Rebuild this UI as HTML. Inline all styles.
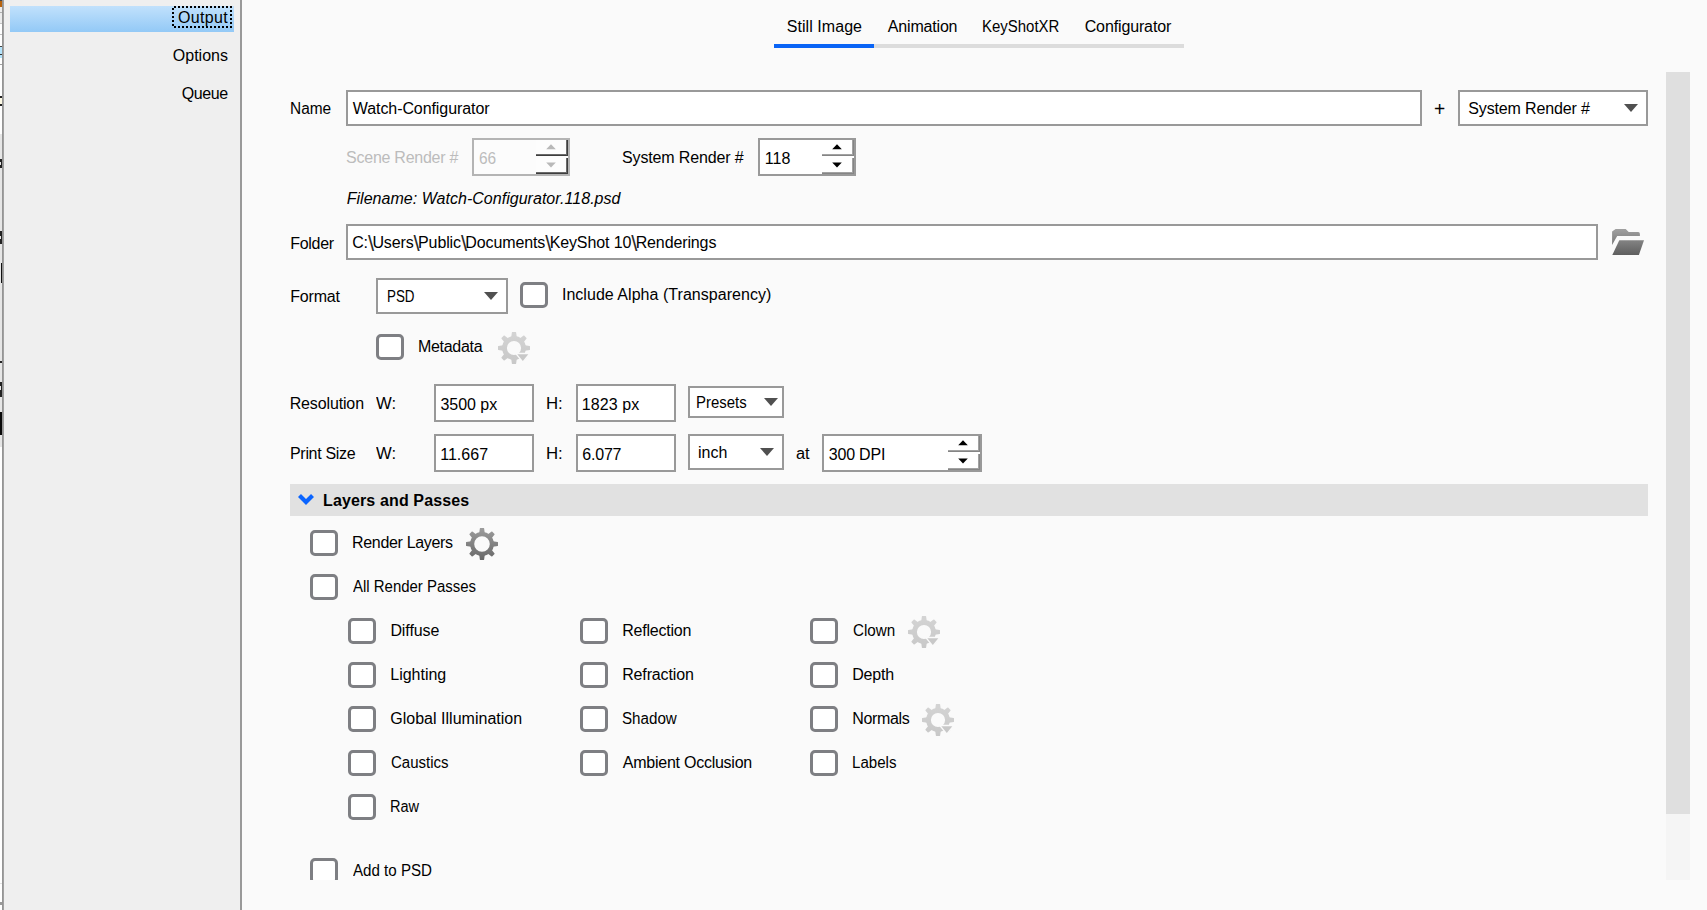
<!DOCTYPE html>
<html lang="en">
<head>
<meta charset="utf-8">
<title>Render Output</title>
<style>
*{box-sizing:border-box;margin:0;padding:0}
html,body{width:1707px;height:910px;overflow:hidden;background:#fafafa}
body{position:relative;font-family:"Liberation Sans",sans-serif;font-size:16px;color:#000;line-height:20px}
.abs,.t,.inp,.cb,.spin{position:absolute}
.t{white-space:pre;height:20px;line-height:20px;transform-origin:0 0}
.t.dis{color:#bcbcbc}
.i{font-style:italic}
.bs{font-size:22px;letter-spacing:-1.67px;position:relative;top:3px;line-height:0;color:#2c2c2c}
.b{font-weight:bold}
#leftstrip{position:absolute;left:0;top:0;width:2px;height:910px;background:#fff}
#leftborder{position:absolute;left:2px;top:0;width:2px;height:910px;background:linear-gradient(90deg,#8e8e8e,#a8a8a8)}
#side{position:absolute;left:4px;top:0;width:236px;height:910px;background:#efefef}
#sideborder{position:absolute;left:240px;top:0;width:2px;height:910px;background:#999}
#hl{position:absolute;left:10px;top:6px;width:224px;height:26px;background:linear-gradient(#c1e1fc,#93c9f6)}
.inp{background:#fff;border:2px solid #999}
.cb{width:28px;height:26px;border:3px solid #7e7f83;border-radius:5px;background:#fff}
.spin{background:#fff;border:2px solid #999}
.spin.dis{border-color:#b4b4b4;background:#fcfcfc}
.sb{position:absolute;right:0;width:32px;background:#fff;box-shadow:inset -1px -1px 0 #858585,inset -2px -2px 0 #a2a2a2}
.spin.dis .sb{background:#fdfdfd;box-shadow:inset -1px -1px 0 #3e3e3e,inset -2px -2px 0 #6a6a6a}
.sb.up{top:0;height:16px}
.sb.dn{top:18px;height:16px}
</style>
</head>
<body>
<div id="leftstrip"></div>
<div class="abs" style="left:0px;top:0px;width:2px;height:7px;background:#b8630d"></div>
<div class="abs" style="left:0px;top:0px;width:2px;height:1px;background:#444"></div>
<div class="abs" style="left:0px;top:7px;width:2px;height:16px;background:#ececec"></div>
<div class="abs" style="left:0px;top:12px;width:2px;height:1px;background:#b0b0b0"></div>
<div class="abs" style="left:0px;top:23px;width:2px;height:1px;background:#c4c4c4"></div>
<div class="abs" style="left:0px;top:34px;width:2px;height:1px;background:#bdbdbd"></div>
<div class="abs" style="left:0px;top:46px;width:2px;height:12px;background:#b4e4fc"></div>
<div class="abs" style="left:0px;top:46px;width:2px;height:1px;background:#444"></div>
<div class="abs" style="left:0px;top:54px;width:2px;height:1px;background:#333"></div>
<div class="abs" style="left:0px;top:64px;width:2px;height:1px;background:#a0a0a0"></div>
<div class="abs" style="left:0px;top:97px;width:2px;height:8px;background:#fffbe6"></div>
<div class="abs" style="left:0px;top:96px;width:2px;height:2px;background:#222"></div>
<div class="abs" style="left:0px;top:104px;width:2px;height:2px;background:#222"></div>
<div class="abs" style="left:0px;top:134px;width:2px;height:313px;background:#e6e6e6"></div>
<div class="abs" style="left:0px;top:159px;width:2px;height:9px;background:#222"></div>
<div class="abs" style="left:0px;top:162px;width:1px;height:3px;background:#e6e6e6"></div>
<div class="abs" style="left:0px;top:231px;width:2px;height:13px;background:#222"></div>
<div class="abs" style="left:0px;top:236px;width:1px;height:3px;background:#e6e6e6"></div>
<div class="abs" style="left:1px;top:263px;width:1px;height:20px;background:#111"></div>
<div class="abs" style="left:0px;top:361px;width:2px;height:2px;background:#222"></div>
<div class="abs" style="left:0px;top:382px;width:2px;height:15px;background:#222"></div>
<div class="abs" style="left:0px;top:386px;width:1px;height:4px;background:#e6e6e6"></div>
<div class="abs" style="left:0px;top:412px;width:2px;height:23px;background:#0a0a0a"></div>
<div class="abs" style="left:0px;top:883px;width:2px;height:1px;background:#e2e2e2"></div>
<div class="abs" style="left:0px;top:902px;width:2px;height:3px;background:#9a9a9a"></div>
<div id="leftborder"></div>
<div id="side"></div>
<div id="sideborder"></div>
<div id="hl"></div>
<svg id="focus" class="abs" style="left:170px;top:4px" width="64" height="26" viewBox="0 0 64 26" shape-rendering="crispEdges"><path d="M4,2h2v2h-2zM8,2h2v2h-2zM12,2h2v2h-2zM16,2h2v2h-2zM20,2h2v2h-2zM24,2h2v2h-2zM28,2h2v2h-2zM32,2h2v2h-2zM36,2h2v2h-2zM40,2h2v2h-2zM44,2h2v2h-2zM48,2h2v2h-2zM52,2h2v2h-2zM56,2h2v2h-2zM60,2h2v2h-2zM4,22h2v2h-2zM8,22h2v2h-2zM12,22h2v2h-2zM16,22h2v2h-2zM20,22h2v2h-2zM24,22h2v2h-2zM28,22h2v2h-2zM32,22h2v2h-2zM36,22h2v2h-2zM40,22h2v2h-2zM44,22h2v2h-2zM48,22h2v2h-2zM52,22h2v2h-2zM56,22h2v2h-2zM60,22h2v2h-2zM2,4h2v2h-2zM2,8h2v2h-2zM2,12h2v2h-2zM2,16h2v2h-2zM2,20h2v2h-2zM60,6h2v2h-2zM60,10h2v2h-2zM60,14h2v2h-2zM60,18h2v2h-2z" fill="#000"/></svg>
<div id="t0" class="t" style="left:177.9px;top:8px;letter-spacing:0.35px;">Output</div>
<div id="t1" class="t" style="left:172.8px;top:46px;">Options</div>
<div id="t2" class="t" style="left:181.8px;top:84px;letter-spacing:-0.41px;">Queue</div>
<div id="t3" class="t" style="left:786.7px;top:17px;letter-spacing:0.06px;">Still Image</div>
<div id="t4" class="t" style="left:887.8px;top:17px;letter-spacing:-0.18px;">Animation</div>
<div id="t5" class="t" style="left:982.4px;top:17px;transform:scaleX(0.936);">KeyShotXR</div>
<div id="t6" class="t" style="left:1084.7px;top:17px;letter-spacing:-0.13px;">Configurator</div>
<div class="abs" style="left:774px;top:44px;width:410px;height:4px;background:#dcdcdc"></div>
<div class="abs" style="left:774px;top:44px;width:100px;height:4px;background:#0a64f6"></div>
<div class="abs" style="left:1666px;top:72px;width:24px;height:808px;background:#f5f5f5"></div>
<div class="abs" style="left:1666px;top:72px;width:24px;height:742px;background:#dfdfdf"></div>
<div id="t7" class="t" style="left:290.4px;top:99px;transform:scaleX(0.965);">Name</div>
<div class="inp" style="left:346px;top:90px;width:1076px;height:36px"></div>
<div id="t8" class="t" style="left:352.8px;top:99px;letter-spacing:-0.08px;">Watch-Configurator</div>
<div id="t9" class="t" style="left:1434.3px;top:99px;transform:scaleX(0.962);font-size:20px">+</div>
<div class="inp" style="left:1458px;top:90px;width:190px;height:36px"></div>
<div id="t10" class="t" style="left:1468.3px;top:99px;letter-spacing:-0.14px;">System Render #</div>
<svg class="abs" style="left:1624px;top:104px" width="14" height="8" viewBox="0 0 14 8"><polygon points="0,0 14,0 7.0,8" fill="#505050"/></svg>
<div id="t11" class="t dis" style="left:346.1px;top:148px;letter-spacing:-0.26px;">Scene Render #</div>
<div class="spin dis" style="left:472px;top:138px;width:98px;height:38px"><div class="sb up"><svg width="10" height="6" viewBox="0 0 10 6" style="position:absolute;left:10px;top:4px"><polygon points="5,0.2 9.8,5.3 0.2,5.3" fill="#b9b9b9"/></svg></div><div class="sb dn"><svg width="10" height="6" viewBox="0 0 10 6" style="position:absolute;left:10px;top:4px"><polygon points="0.2,0.4 9.8,0.4 5,5.5" fill="#b9b9b9"/></svg></div></div>
<div id="t12" class="t dis" style="left:478.5px;top:149px;transform:scaleX(0.966);">66</div>
<div id="t13" class="t" style="left:622px;top:148px;letter-spacing:-0.14px;">System Render #</div>
<div class="spin" style="left:758px;top:138px;width:98px;height:38px"><div class="sb up"><svg width="10" height="6" viewBox="0 0 10 6" style="position:absolute;left:10px;top:4px"><polygon points="5,0.2 9.8,5.3 0.2,5.3" fill="#000"/></svg></div><div class="sb dn"><svg width="10" height="6" viewBox="0 0 10 6" style="position:absolute;left:10px;top:4px"><polygon points="0.2,0.4 9.8,0.4 5,5.5" fill="#000"/></svg></div></div>
<div id="t14" class="t" style="left:764.8px;top:149px;letter-spacing:0.06px;">118</div>
<div id="t15" class="t i" style="left:346.7px;top:189px;letter-spacing:0.03px;">Filename: Watch-Configurator.118.psd</div>
<div id="t16" class="t" style="left:290.3px;top:234px;letter-spacing:-0.32px;">Folder</div>
<div class="inp" style="left:346px;top:224px;width:1252px;height:36px"></div>
<div id="t17" class="t" style="left:352.2px;top:233px;letter-spacing:-0.12px;">C:<span class="bs">\</span>Users<span class="bs">\</span>Public<span class="bs">\</span>Documents<span class="bs">\</span>KeyShot 10<span class="bs">\</span>Renderings</div>
<svg class="abs" style="left:1610px;top:226px" width="36" height="32" viewBox="1610 226 36 32"><defs><linearGradient id="fg" gradientUnits="userSpaceOnUse" x1="0" y1="229" x2="0" y2="255"><stop offset="0" stop-color="#a0a0a0"/><stop offset="1" stop-color="#5e5e5e"/></linearGradient></defs><path fill="url(#fg)" d="M1612.1,231.4L1615.6,229H1625.7L1628.7,232H1638.2Q1639.9,232.2 1639.9,234V235.9H1617.2L1612.1,245Z"/><path fill="url(#fg)" d="M1619.3,240.2H1644L1638.9,255H1612.3Z"/></svg>
<div id="t18" class="t" style="left:290.3px;top:287px;letter-spacing:-0.2px;">Format</div>
<div class="inp" style="left:376px;top:278px;width:132px;height:36px"></div>
<div id="t19" class="t" style="left:386.6px;top:287px;transform:scaleX(0.837);">PSD</div>
<svg class="abs" style="left:484px;top:292px" width="14" height="8" viewBox="0 0 14 8"><polygon points="0,0 14,0 7.0,8" fill="#505050"/></svg>
<div class="cb" style="left:520px;top:282px"></div>
<div id="t20" class="t" style="left:561.9px;top:285px;letter-spacing:0.04px;">Include Alpha (Transparency)</div>
<div class="cb" style="left:376px;top:334px"></div>
<div id="t21" class="t" style="left:418px;top:337px;letter-spacing:-0.31px;">Metadata</div>
<svg class="abs" style="left:498px;top:332px" width="32" height="32" viewBox="-16 -16 32 32"><defs><linearGradient id="g498_332" gradientUnits="userSpaceOnUse" x1="0" y1="-16" x2="0" y2="16"><stop offset="0" stop-color="#d4d4d4"/><stop offset="1" stop-color="#c8c8c8"/></linearGradient></defs><g fill="url(#g498_332)" stroke="none"><path d="M-2.80,-10.80L-2.10,-15.70L-1.70,-16.00L1.70,-16.00L2.10,-15.70L2.80,-10.80ZM5.66,-9.62L9.62,-12.59L10.11,-12.52L12.52,-10.11L12.59,-9.62L9.62,-5.66ZM10.80,-2.80L15.70,-2.10L16.00,-1.70L16.00,1.70L15.70,2.10L10.80,2.80ZM9.62,5.66L12.59,9.62L12.52,10.11L10.11,12.52L9.62,12.59L5.66,9.62ZM2.80,10.80L2.10,15.70L1.70,16.00L-1.70,16.00L-2.10,15.70L-2.80,10.80ZM-5.66,9.62L-9.62,12.59L-10.11,12.52L-12.52,10.11L-12.59,9.62L-9.62,5.66ZM-10.80,2.80L-15.70,2.10L-16.00,1.70L-16.00,-1.70L-15.70,-2.10L-10.80,-2.80ZM-9.62,-5.66L-12.59,-9.62L-12.52,-10.11L-10.11,-12.52L-9.62,-12.59L-5.66,-9.62Z"/><path fill-rule="evenodd" d="M0,-11.9A11.9,11.9 0 1 0 0,11.9A11.9,11.9 0 1 0 0,-11.9ZM0,-7.1A7.1,7.1 0 1 1 0,7.1A7.1,7.1 0 1 1 0,-7.1Z"/></g><polygon points="3.3,6.2 14.3,6.2 8.8,12.9" fill="#fafafa" stroke="#fafafa" stroke-width="2.8" stroke-linejoin="miter"/><polygon points="3.3,6.2 14.3,6.2 8.8,12.9" fill="#c8c8c8"/></svg>
<div id="t22" class="t" style="left:289.7px;top:394px;letter-spacing:-0.14px;">Resolution</div>
<div id="t23" class="t" style="left:376.1px;top:394px;transform:scaleX(1.041);">W:</div>
<div class="inp" style="left:434px;top:384px;width:100px;height:38px"></div>
<div id="t24" class="t" style="left:440.4px;top:395px;letter-spacing:-0.02px;">3500 px</div>
<div id="t25" class="t" style="left:545.5px;top:394px;transform:scaleX(1.049);">H:</div>
<div class="inp" style="left:576px;top:384px;width:100px;height:38px"></div>
<div id="t26" class="t" style="left:581.8px;top:395px;letter-spacing:0.08px;">1823 px</div>
<div class="inp" style="left:688px;top:386px;width:96px;height:32px"></div>
<div id="t27" class="t" style="left:696.3px;top:393px;transform:scaleX(0.933);">Presets</div>
<svg class="abs" style="left:764px;top:398px" width="14" height="8" viewBox="0 0 14 8"><polygon points="0,0 14,0 7.0,8" fill="#505050"/></svg>
<div id="t28" class="t" style="left:290px;top:444px;letter-spacing:-0.31px;">Print Size</div>
<div id="t29" class="t" style="left:376.1px;top:444px;transform:scaleX(1.041);">W:</div>
<div class="inp" style="left:434px;top:434px;width:100px;height:38px"></div>
<div id="t30" class="t" style="left:440.2px;top:445px;letter-spacing:0.02px;">11.667</div>
<div id="t31" class="t" style="left:545.5px;top:444px;transform:scaleX(1.049);">H:</div>
<div class="inp" style="left:576px;top:434px;width:100px;height:38px"></div>
<div id="t32" class="t" style="left:582.3px;top:445px;letter-spacing:-0.21px;">6.077</div>
<div class="inp" style="left:688px;top:434px;width:96px;height:36px"></div>
<div id="t33" class="t" style="left:698px;top:443px;letter-spacing:0.01px;">inch</div>
<svg class="abs" style="left:760px;top:448px" width="14" height="8" viewBox="0 0 14 8"><polygon points="0,0 14,0 7.0,8" fill="#505050"/></svg>
<div id="t34" class="t" style="left:795.6px;top:444px;transform:scaleX(1.021);">at</div>
<div class="spin" style="left:822px;top:434px;width:160px;height:38px"><div class="sb up"><svg width="10" height="6" viewBox="0 0 10 6" style="position:absolute;left:10px;top:4px"><polygon points="5,0.2 9.8,5.3 0.2,5.3" fill="#000"/></svg></div><div class="sb dn"><svg width="10" height="6" viewBox="0 0 10 6" style="position:absolute;left:10px;top:4px"><polygon points="0.2,0.4 9.8,0.4 5,5.5" fill="#000"/></svg></div></div>
<div id="t35" class="t" style="left:828.8px;top:445px;letter-spacing:-0.21px;">300 DPI</div>
<div class="abs" style="left:290px;top:484px;width:1358px;height:32px;background:#e1e1e1"></div>
<svg class="abs" style="left:296px;top:492px" width="20" height="16" viewBox="296 492 20 16"><path d="M299.5,495.6L306,502.1L312.5,495.6" fill="none" stroke="#0a64ff" stroke-width="4.2" stroke-linejoin="miter"/></svg>
<div id="t36" class="t b" style="left:323px;top:491px;letter-spacing:0.13px;">Layers and Passes</div>
<div class="cb" style="left:310px;top:530px"></div>
<div id="t37" class="t" style="left:352.1px;top:533px;letter-spacing:-0.34px;">Render Layers</div>
<svg class="abs" style="left:466px;top:528px" width="32" height="32" viewBox="-16 -16 32 32"><defs><linearGradient id="g466_528" gradientUnits="userSpaceOnUse" x1="0" y1="-16" x2="0" y2="16"><stop offset="0" stop-color="#9c9c9c"/><stop offset="1" stop-color="#686868"/></linearGradient></defs><g fill="url(#g466_528)" stroke="none"><path d="M-2.80,-10.80L-2.10,-15.70L-1.70,-16.00L1.70,-16.00L2.10,-15.70L2.80,-10.80ZM5.66,-9.62L9.62,-12.59L10.11,-12.52L12.52,-10.11L12.59,-9.62L9.62,-5.66ZM10.80,-2.80L15.70,-2.10L16.00,-1.70L16.00,1.70L15.70,2.10L10.80,2.80ZM9.62,5.66L12.59,9.62L12.52,10.11L10.11,12.52L9.62,12.59L5.66,9.62ZM2.80,10.80L2.10,15.70L1.70,16.00L-1.70,16.00L-2.10,15.70L-2.80,10.80ZM-5.66,9.62L-9.62,12.59L-10.11,12.52L-12.52,10.11L-12.59,9.62L-9.62,5.66ZM-10.80,2.80L-15.70,2.10L-16.00,1.70L-16.00,-1.70L-15.70,-2.10L-10.80,-2.80ZM-9.62,-5.66L-12.59,-9.62L-12.52,-10.11L-10.11,-12.52L-9.62,-12.59L-5.66,-9.62Z"/><path fill-rule="evenodd" d="M0,-11.9A11.9,11.9 0 1 0 0,11.9A11.9,11.9 0 1 0 0,-11.9ZM0,-7.8A7.8,7.8 0 1 1 0,7.8A7.8,7.8 0 1 1 0,-7.8Z"/></g></svg>
<div class="cb" style="left:310px;top:574px"></div>
<div id="t38" class="t" style="left:352.9px;top:577px;transform:scaleX(0.935);">All Render Passes</div>
<div class="cb" style="left:348px;top:618px"></div>
<div id="t39" class="t" style="left:390.4px;top:621px;letter-spacing:-0.09px;">Diffuse</div>
<div class="cb" style="left:348px;top:662px"></div>
<div id="t40" class="t" style="left:390.3px;top:665px;letter-spacing:-0.02px;">Lighting</div>
<div class="cb" style="left:348px;top:706px"></div>
<div id="t41" class="t" style="left:390.2px;top:709px;letter-spacing:0.02px;">Global Illumination</div>
<div class="cb" style="left:348px;top:750px"></div>
<div id="t42" class="t" style="left:390.5px;top:753px;transform:scaleX(0.938);">Caustics</div>
<div class="cb" style="left:348px;top:794px"></div>
<div id="t43" class="t" style="left:390.4px;top:797px;transform:scaleX(0.910);">Raw</div>
<div class="cb" style="left:580px;top:618px"></div>
<div id="t44" class="t" style="left:622.2px;top:621px;letter-spacing:-0.21px;">Reflection</div>
<div class="cb" style="left:580px;top:662px"></div>
<div id="t45" class="t" style="left:622.2px;top:665px;letter-spacing:-0.14px;">Refraction</div>
<div class="cb" style="left:580px;top:706px"></div>
<div id="t46" class="t" style="left:621.9px;top:709px;transform:scaleX(0.948);">Shadow</div>
<div class="cb" style="left:580px;top:750px"></div>
<div id="t47" class="t" style="left:622.8px;top:753px;letter-spacing:-0.25px;">Ambient Occlusion</div>
<div class="cb" style="left:810px;top:618px"></div>
<div id="t48" class="t" style="left:852.6px;top:621px;transform:scaleX(0.950);">Clown</div>
<div class="cb" style="left:810px;top:662px"></div>
<div id="t49" class="t" style="left:852.2px;top:665px;letter-spacing:-0.16px;">Depth</div>
<div class="cb" style="left:810px;top:706px"></div>
<div id="t50" class="t" style="left:852.2px;top:709px;letter-spacing:-0.35px;">Normals</div>
<div class="cb" style="left:810px;top:750px"></div>
<div id="t51" class="t" style="left:852.3px;top:753px;transform:scaleX(0.943);">Labels</div>
<svg class="abs" style="left:908px;top:616px" width="32" height="32" viewBox="-16 -16 32 32"><defs><linearGradient id="g908_616" gradientUnits="userSpaceOnUse" x1="0" y1="-16" x2="0" y2="16"><stop offset="0" stop-color="#d4d4d4"/><stop offset="1" stop-color="#c8c8c8"/></linearGradient></defs><g fill="url(#g908_616)" stroke="none"><path d="M-2.80,-10.80L-2.10,-15.70L-1.70,-16.00L1.70,-16.00L2.10,-15.70L2.80,-10.80ZM5.66,-9.62L9.62,-12.59L10.11,-12.52L12.52,-10.11L12.59,-9.62L9.62,-5.66ZM10.80,-2.80L15.70,-2.10L16.00,-1.70L16.00,1.70L15.70,2.10L10.80,2.80ZM9.62,5.66L12.59,9.62L12.52,10.11L10.11,12.52L9.62,12.59L5.66,9.62ZM2.80,10.80L2.10,15.70L1.70,16.00L-1.70,16.00L-2.10,15.70L-2.80,10.80ZM-5.66,9.62L-9.62,12.59L-10.11,12.52L-12.52,10.11L-12.59,9.62L-9.62,5.66ZM-10.80,2.80L-15.70,2.10L-16.00,1.70L-16.00,-1.70L-15.70,-2.10L-10.80,-2.80ZM-9.62,-5.66L-12.59,-9.62L-12.52,-10.11L-10.11,-12.52L-9.62,-12.59L-5.66,-9.62Z"/><path fill-rule="evenodd" d="M0,-11.9A11.9,11.9 0 1 0 0,11.9A11.9,11.9 0 1 0 0,-11.9ZM0,-7.1A7.1,7.1 0 1 1 0,7.1A7.1,7.1 0 1 1 0,-7.1Z"/></g><polygon points="3.3,6.2 14.3,6.2 8.8,12.9" fill="#fafafa" stroke="#fafafa" stroke-width="2.8" stroke-linejoin="miter"/><polygon points="3.3,6.2 14.3,6.2 8.8,12.9" fill="#c8c8c8"/></svg>
<svg class="abs" style="left:922px;top:704px" width="32" height="32" viewBox="-16 -16 32 32"><defs><linearGradient id="g922_704" gradientUnits="userSpaceOnUse" x1="0" y1="-16" x2="0" y2="16"><stop offset="0" stop-color="#d4d4d4"/><stop offset="1" stop-color="#c8c8c8"/></linearGradient></defs><g fill="url(#g922_704)" stroke="none"><path d="M-2.80,-10.80L-2.10,-15.70L-1.70,-16.00L1.70,-16.00L2.10,-15.70L2.80,-10.80ZM5.66,-9.62L9.62,-12.59L10.11,-12.52L12.52,-10.11L12.59,-9.62L9.62,-5.66ZM10.80,-2.80L15.70,-2.10L16.00,-1.70L16.00,1.70L15.70,2.10L10.80,2.80ZM9.62,5.66L12.59,9.62L12.52,10.11L10.11,12.52L9.62,12.59L5.66,9.62ZM2.80,10.80L2.10,15.70L1.70,16.00L-1.70,16.00L-2.10,15.70L-2.80,10.80ZM-5.66,9.62L-9.62,12.59L-10.11,12.52L-12.52,10.11L-12.59,9.62L-9.62,5.66ZM-10.80,2.80L-15.70,2.10L-16.00,1.70L-16.00,-1.70L-15.70,-2.10L-10.80,-2.80ZM-9.62,-5.66L-12.59,-9.62L-12.52,-10.11L-10.11,-12.52L-9.62,-12.59L-5.66,-9.62Z"/><path fill-rule="evenodd" d="M0,-11.9A11.9,11.9 0 1 0 0,11.9A11.9,11.9 0 1 0 0,-11.9ZM0,-7.1A7.1,7.1 0 1 1 0,7.1A7.1,7.1 0 1 1 0,-7.1Z"/></g><polygon points="3.3,6.2 14.3,6.2 8.8,12.9" fill="#fafafa" stroke="#fafafa" stroke-width="2.8" stroke-linejoin="miter"/><polygon points="3.3,6.2 14.3,6.2 8.8,12.9" fill="#c8c8c8"/></svg>
<div class="abs" style="left:300px;top:850px;width:200px;height:30px;overflow:hidden"><div class="cb" style="left:10px;top:8px"></div></div>
<div id="t52" class="t" style="left:352.9px;top:861px;transform:scaleX(0.945);">Add to PSD</div>
</body>
</html>
